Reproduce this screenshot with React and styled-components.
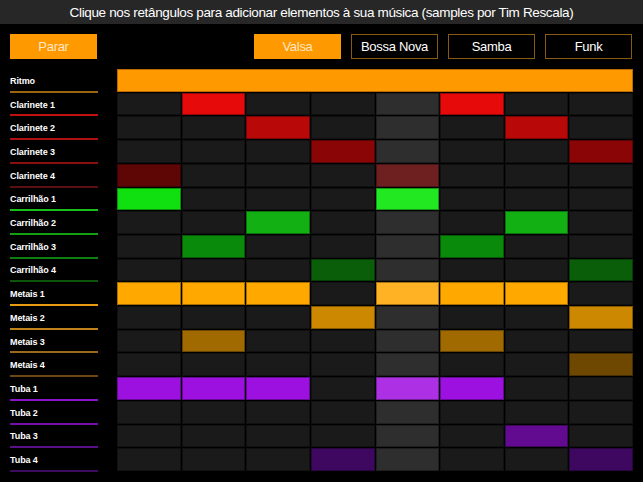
import React from "react";
import styled, { createGlobalStyle } from "styled-components";

const Global = createGlobalStyle`
  html, body { margin: 0; padding: 0; background: #000; }
  body { font-family: "Liberation Sans", Arial, sans-serif; }
`;

const Page = styled.div`
  width: 643px;
  height: 482px;
  background: #000;
  overflow: hidden;
`;

const Header = styled.header`
  height: 24px;
  background: #272727;
  color: #fff;
  font-size: 13.5px;
  letter-spacing: -0.35px;
  line-height: 25px;
  text-align: center;
`;

const Toolbar = styled.div`
  display: flex;
  align-items: center;
  padding: 10px 11px 0 10px;
  height: 25px;
`;

const Spacer = styled.div`
  flex: 1;
`;

const Button = styled.div`
  box-sizing: border-box;
  width: 87px;
  height: 25px;
  margin-left: ${(p) => p.$ml || 0}px;
  display: flex;
  align-items: center;
  justify-content: center;
  font-size: 13px;
  letter-spacing: -0.3px;
  color: ${(p) => (p.$active ? "#ffe6c4" : "#fff")};
  background: ${(p) => (p.$active ? "#ff9900" : "#000")};
  border: 1px solid ${(p) => (p.$active ? "#ff9900" : "#8a5a14")};
`;

const Main = styled.div`
  display: flex;
  padding: 10px 0 0 10px;
`;

const Labels = styled.div`
  width: 88px;
  height: 402px;
  display: grid;
  grid-template-rows: repeat(17, 1fr);
  row-gap: 1px;
`;

const Label = styled.div`
  box-sizing: border-box;
  display: flex;
  align-items: center;
  padding-top: 2px;
  color: #fff;
  font-size: 9px;
  font-weight: bold;
  letter-spacing: -0.1px;
  border-bottom: 2px solid ${(p) => p.$line};
  margin-bottom: -1px;
`;

const Grid = styled.div`
  margin-left: 19px;
  width: 516px;
  height: 402px;
  display: grid;
  grid-template-columns: repeat(8, 1fr);
  grid-template-rows: repeat(17, 1fr);
  gap: 1px;
`;

const RitmoBar = styled.div`
  grid-column: 1 / span 8;
  background: #ff9900;
  box-shadow: inset 0 0 0 1px rgba(120, 60, 0, 0.5);
`;

const Cell = styled.div`
  background: ${(p) => p.$bg};
  box-shadow: inset 0 0 0 1px rgba(0, 0, 0, 0.35);
`;

const rows = [
  { name: "Clarinete 1", color: "#e60a0a", hi: "#ee2020", line: "#c01010", on: [1, 5] },
  { name: "Clarinete 2", color: "#b80808", hi: "#c01818", line: "#b01010", on: [2, 6] },
  { name: "Clarinete 3", color: "#8a0606", hi: "#981818", line: "#8a1010", on: [3, 7] },
  { name: "Clarinete 4", color: "#5e0606", hi: "#6e2020", line: "#5a1010", on: [0, 4] },
  { name: "Carrilhão 1", color: "#10e010", hi: "#22e822", line: "#18c018", on: [0, 4] },
  { name: "Carrilhão 2", color: "#12b012", hi: "#22bb22", line: "#12a012", on: [2, 6] },
  { name: "Carrilhão 3", color: "#0a8a0a", hi: "#1a981a", line: "#0e7e0e", on: [1, 5] },
  { name: "Carrilhão 4", color: "#0a5e0a", hi: "#1a6e1a", line: "#0c560c", on: [3, 7] },
  { name: "Metais 1", color: "#ffa800", hi: "#ffb224", line: "#e89a10", on: [0, 1, 2, 4, 5, 6] },
  { name: "Metais 2", color: "#cc8800", hi: "#d49420", line: "#c08418", on: [3, 7] },
  { name: "Metais 3", color: "#a06a00", hi: "#aa7818", line: "#9a6a18", on: [1, 5] },
  { name: "Metais 4", color: "#6e4800", hi: "#7a5418", line: "#6a4614", on: [7] },
  { name: "Tuba 1", color: "#9c10e0", hi: "#ae30e4", line: "#8c14c8", on: [0, 1, 2, 4, 5] },
  { name: "Tuba 2", color: "#7c0cb4", hi: "#8a24bc", line: "#7410a8", on: [] },
  { name: "Tuba 3", color: "#620a90", hi: "#70229a", line: "#5c1088", on: [6] },
  { name: "Tuba 4", color: "#3e0860", hi: "#4c1a6c", line: "#3e0c5e", on: [3, 7] },
];

const PLAYHEAD = 4;

export default function App() {
  return (
    <Page>
      <Global />
      <Header>Clique nos retângulos para adicionar elementos à sua música (samples por Tim Rescala)</Header>
      <Toolbar>
        <Button $active>Parar</Button>
        <Spacer />
        <Button $active>Valsa</Button>
        <Button $ml={10}>Bossa Nova</Button>
        <Button $ml={10}>Samba</Button>
        <Button $ml={10}>Funk</Button>
      </Toolbar>
      <Main>
        <Labels>
          <Label $line="#9a6410">Ritmo</Label>
          {rows.map((r) => (
            <Label key={r.name} $line={r.line}>{r.name}</Label>
          ))}
        </Labels>
        <Grid>
          <RitmoBar />
          {rows.map((r) =>
            Array.from({ length: 8 }).map((_, c) => {
              const on = r.on.includes(c);
              const play = c === PLAYHEAD;
              const bg = on ? (play ? r.hi : r.color) : play ? "#2e2e2e" : "#1a1a1a";
              return <Cell key={r.name + c} $bg={bg} />;
            })
          )}
        </Grid>
      </Main>
    </Page>
  );
}
